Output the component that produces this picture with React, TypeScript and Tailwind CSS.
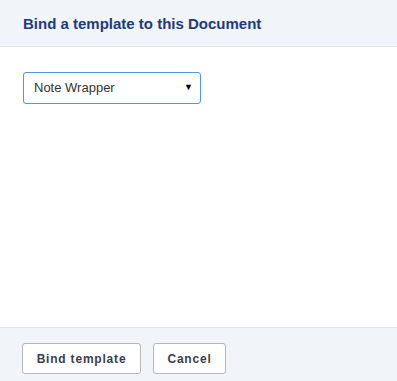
import React from "react";

const App = () => {
  return (
    <div
      className="w-[397px] h-[381px] flex flex-col bg-white"
      style={{ fontFamily: '"Liberation Sans", Arial, sans-serif' }}
    >
      {/* Header */}
      <div className="h-[47px] shrink-0 flex items-center px-[23px] bg-[#f1f4f8] border-b border-[#e3e7ec]">
        <h2 className="text-[15px] font-bold text-[#1d3b7a] pt-[2px]">Bind a template to this Document</h2>
      </div>

      {/* Body */}
      <div className="flex-1 px-[23px] pt-[25px]">
        <div className="relative w-[178px] h-[32px] border border-[#4a98e8] rounded-[3px] flex items-center pl-[10px] text-[13px] text-[#333]">
          Note Wrapper
          <span className="absolute right-[7px] top-[8px] text-[9px] text-black">▼</span>
        </div>
      </div>

      {/* Footer */}
      <div className="h-[54px] shrink-0 flex items-start pt-[15px] gap-[12px] px-[22px] bg-[#f1f4f8] border-t border-[#e3e7ec]">
        <button className="h-[31px] w-[119px] bg-white border border-[#b7b7b7] rounded-[3px] text-[12px] font-bold tracking-[0.8px] text-[#3a3f4a]">
          Bind template
        </button>
        <button className="h-[31px] w-[73px] bg-white border border-[#b7b7b7] rounded-[3px] text-[12px] font-bold tracking-[0.8px] text-[#3a3f4a]">
          Cancel
        </button>
      </div>
    </div>
  );
};

export default App;
